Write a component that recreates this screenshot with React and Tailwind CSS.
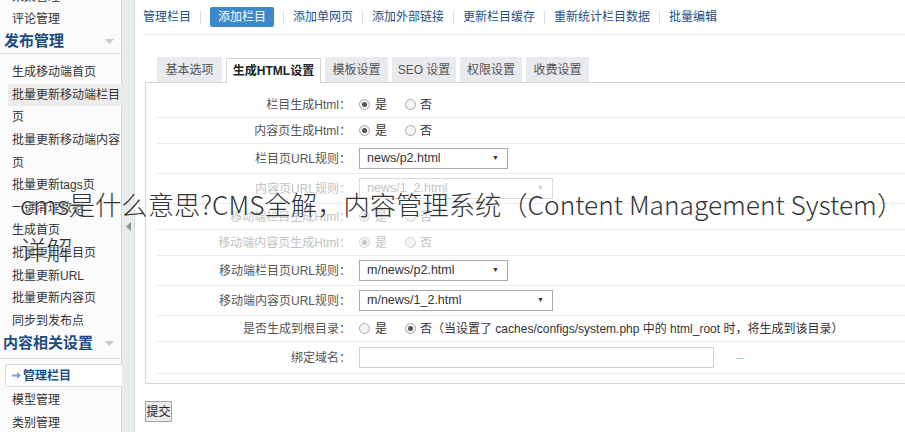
import React from "react";

const sideTop = ["采集管理", "评论管理"];
const publishItems = [
  { t: "生成移动端首页" },
  { t: "批量更新移动端栏目", hl: true },
  { t: "页" },
  { t: "批量更新移动端内容" },
  { t: "页" },
  { t: "批量更新tags页" },
  { t: "一键清理数据" },
  { t: "生成首页" },
  { t: "批量更新栏目页" },
  { t: "批量更新URL" },
  { t: "批量更新内容页" },
  { t: "同步到发布点" },
];

const toolbar = ["添加单网页", "添加外部链接", "更新栏目缓存", "重新统计栏目数据", "批量编辑"];
const tabs = [
  { t: "基本选项", w: "w-[65px]" },
  { t: "生成HTML设置", w: "w-[95px]", active: true },
  { t: "模板设置", w: "w-[63px]" },
  { t: "SEO 设置", w: "w-[64px]" },
  { t: "权限设置", w: "w-[62px]" },
  { t: "收费设置", w: "w-[63px]" },
];

const Caret = () => (
  <svg width="9" height="5" viewBox="0 0 9 5" className="mr-[7px]">
    <path d="M0 0 L9 0 L4.5 5 Z" fill="#c4c8cc" />
  </svg>
);

const Header = ({ children }) => (
  <div className="h-[24px] flex items-center justify-between pl-[4px] text-[15px] font-bold text-[#1d4d7e] border-b border-[#dcdcdc]">
    <span>{children}</span>
    <Caret />
  </div>
);

const Radio = ({ checked, faded }) => (
  <span
    className={`inline-flex items-center justify-center w-[11px] h-[11px] rounded-full border ${
      faded ? "border-[#d4d4d4]" : "border-[#a8a8a8]"
    } bg-[#f4f4f4]`}
  >
    {checked && <span className={`w-[5px] h-[5px] rounded-full ${faded ? "bg-[#c8c8c8]" : "bg-[#555]"}`} />}
  </span>
);

const YesNo = ({ yes = true, faded, extra }) => (
  <div className={`flex items-center whitespace-nowrap ${faded ? "text-[#c2c2c2]" : "text-[#333]"}`}>
    <Radio checked={yes} faded={faded} />
    <span className="ml-[5px]">是</span>
    <span className="ml-[18px] flex items-center">
      <Radio checked={!yes} faded={faded} />
    </span>
    <span className="ml-[4px]">否{extra}</span>
  </div>
);

const Select = ({ value, wide, faded }) => (
  <div
    className={`h-[21px] flex items-center justify-between pl-[7px] pr-[8px] border bg-white ${
      wide ? "w-[194px]" : "w-[149px]"
    } ${faded ? "border-[#dadada] text-[#c6c6c6]" : "border-[#a9a9a9] text-[#333]"}`}
    style={{ fontFamily: "'Liberation Sans', Arial, sans-serif" }}
  >
    <span className="text-[12.5px]">{value}</span>
    <span className={`text-[7px] ${faded ? "text-[#ccc]" : "text-[#333]"}`}>▼</span>
  </div>
);

const Row = ({ label, h, faded, children }) => (
  <div className={`flex items-center border-b border-[#ececec] ${h}`}>
    <div className={`w-[195px] text-right ${faded ? "text-[#c2c2c2]" : "text-[#555]"}`}>{label}：</div>
    <div className="ml-[8px] flex items-center">{children}</div>
  </div>
);

export default function App() {
  return (
    <div
      className="relative w-[905px] h-[432px] overflow-hidden bg-white flex text-[12px]"
      style={{ fontFamily: "'Liberation Sans', 'Noto Sans CJK SC', sans-serif" }}
    >
      {/* sidebar */}
      <div className="w-[122px] shrink-0 bg-[#fbfbfb] border-r border-[#d6d6d6]">
        <div className="-mt-[14px] text-[#333] whitespace-nowrap">
          {sideTop.map((t) => (
            <div key={t} className="h-[22px] leading-[22px] pl-[12px]">
              {t}
            </div>
          ))}
          <Header>发布管理</Header>
          <div className="pt-[7px]">
            {publishItems.map((it, i) => (
              <div key={i} className="h-[22.6px] flex items-center pl-[8px]">
                <span className={`px-[4px] leading-[22px] ${it.hl ? "bg-[#ececec]" : ""}`}>{it.t}</span>
              </div>
            ))}
          </div>
          <div className="h-[22px] flex items-center justify-between pl-[3px] text-[15px] font-bold text-[#1d4d7e]">
            <span>内容相关设置</span>
            <Caret />
          </div>
          <div className="border-t border-[#dcdcdc] mt-[4px] pt-[5px] pl-[5px]">
            <div className="h-[23px] flex items-center pl-[6px] bg-white border border-r-0 border-[#dadada] rounded-l-[3px] -mr-px font-bold text-[#1d4d7e]">
              <svg width="9" height="7" viewBox="0 0 9 7" className="mr-[2px]">
                <path d="M0 2.5 H5 V0 L9 3.5 L5 7 V4.5 H0 Z" fill="#7fa0c0" />
              </svg>
              管理栏目
            </div>
          </div>
          <div className="h-[22.6px] leading-[22.6px] pl-[12px] mt-[2px]">模型管理</div>
          <div className="h-[22.6px] leading-[22.6px] pl-[12px]">类别管理</div>
        </div>
      </div>

      {/* splitter */}
      <div className="w-[13px] shrink-0 bg-[#e6ecea] border-r border-[#d3d9d7] flex justify-center pt-[222px]">
        <svg width="5" height="9" viewBox="0 0 5 9">
          <path d="M5 0 L5 9 L0 4.5 Z" fill="#8a9094" />
        </svg>
      </div>

      {/* main */}
      <div className="flex-1 pl-[10px] min-w-0">
        <div className="h-[35px] -ml-[2px] pt-[7px] border-b border-[#ececec] flex items-start text-[#1e4f85] whitespace-nowrap">
          <span className="h-[20px] leading-[20px]">管理栏目</span>
          <span className="w-px h-[13px] bg-[#dedede] mx-[9px] mt-[4px]" />
          <span className="h-[20px] leading-[20px] px-[8px] bg-[#3d88cc] text-white rounded-[2px]">添加栏目</span>
          {toolbar.map((t) => (
            <React.Fragment key={t}>
              <span className="w-px h-[13px] bg-[#dedede] mx-[9px] mt-[4px]" />
              <span className="h-[20px] leading-[20px]">{t}</span>
            </React.Fragment>
          ))}
        </div>

        <div className="mt-[22px] pl-[12px] flex items-end gap-[4px] whitespace-nowrap">
          {tabs.map((tab) =>
            tab.active ? (
              <div
                key={tab.t}
                className={`${tab.w} h-[25px] flex items-center justify-center bg-white border border-b-0 border-[#d6d6d6] font-bold text-[#222] -mb-px relative z-10`}
              >
                {tab.t}
              </div>
            ) : (
              <div key={tab.t} className={`${tab.w} h-[25px] flex items-center justify-center bg-[#e8eaed] text-[#555]`}>
                {tab.t}
              </div>
            )
          )}
        </div>

        <div className="w-[800px] border border-[#d6d6d6] pt-[9px] pb-[9px] pl-[10px]">
          <Row label="栏目生成Html" h="h-[26px]">
            <YesNo />
          </Row>
          <Row label="内容页生成Html" h="h-[26px]">
            <YesNo />
          </Row>
          <Row label="栏目页URL规则" h="h-[30px]">
            <Select value="news/p2.html" />
          </Row>
          <Row label="内容页URL规则" h="h-[30px]" faded>
            <Select value="news/1_2.html" wide faded />
          </Row>
          <Row label="移动端栏目生成Html" h="h-[26px]" faded>
            <YesNo faded />
          </Row>
          <Row label="移动端内容页生成Html" h="h-[26px]" faded>
            <YesNo faded />
          </Row>
          <Row label="移动端栏目页URL规则" h="h-[30px]">
            <Select value="m/news/p2.html" />
          </Row>
          <Row label="移动端内容页URL规则" h="h-[30px]">
            <Select value="m/news/1_2.html" wide />
          </Row>
          <Row label="是否生成到根目录" h="h-[26px]">
            <YesNo yes={false} extra="（当设置了 caches/configs/system.php 中的 html_root 时，将生成到该目录）" />
          </Row>
          <Row label="绑定域名" h="h-[32px]">
            <div className="w-[355px] h-[21px] border border-[#cfcfcf] bg-white" />
            <span className="ml-[22px] text-[#9cc8c4]">–</span>
          </Row>
        </div>

        <button className="mt-[17px] h-[21px] w-[27px] flex items-center justify-center bg-[#ebebeb] border border-[#a3a3a3] text-[#222] text-[12px]">
          提交
        </button>
      </div>

      {/* overlay title */}
      <div
        className="absolute left-[20px] top-[181px] text-[26.3px] leading-[45px] font-light text-[#333] whitespace-nowrap [text-shadow:0_0_2px_#fff,0_0_3px_#fff]"
        style={{ fontFamily: "'Noto Sans CJK SC', 'Noto Sans', sans-serif" }}
      >
        cms是什么意思?CMS全解，内容管理系统（Content Management System）
        <br />
        详解
      </div>
    </div>
  );
}
